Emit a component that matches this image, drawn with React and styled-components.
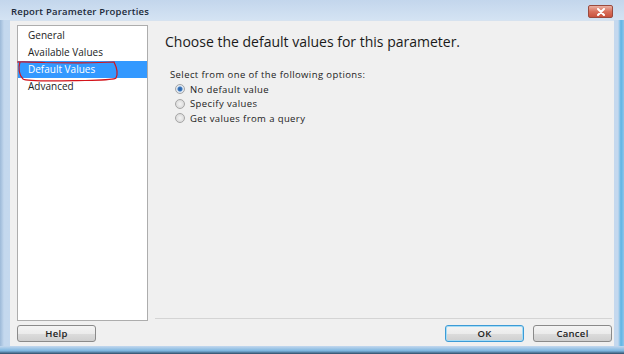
import React from 'react';
import styled, { createGlobalStyle } from 'styled-components';

const GlobalStyle = createGlobalStyle`
    html, body {
        margin: 0;
        padding: 0;
        background: #ffffff;
    }
    body {
        font-family: "Open Sans", "DejaVu Sans", sans-serif;
    }
`

const pages = ['General', 'Available Values', 'Default Values', 'Advanced'];

const options = ['No default value', 'Specify values', 'Get values from a query'];

const App = () => {

    const mapToItems = (list) => {
        return list.map((value, index) => (
            <NavItem key={index} selected={value === 'Default Values'}>{value}</NavItem>
        ));
    }

    const mapToOptions = (list) => {
        return list.map((value, index) => (
            <Option key={index}>
                <Radio checked={index === 0} />
                <span>{value}</span>
            </Option>
        ));
    }

    return (
        <>
            <GlobalStyle />
            <Window>
                <TitleBar>
                    <Title>Report Parameter Properties</Title>
                    <CloseButton>
                        <svg width="10" height="8" viewBox="0 0 10 8">
                            <path d="M2 1 L8 7 M8 1 L2 7" stroke="#ffffff" strokeWidth="2" strokeLinecap="round" />
                        </svg>
                    </CloseButton>
                </TitleBar>
                <Client>
                    <Body>
                        <Sidebar>
                            { mapToItems(pages) }
                            <Scribble width="110" height="26" viewBox="0 0 110 26">
                                <path
                                    d="M5 1 C3 7 4 14 8 18 C12 21 40 20 70 19.5 C88 19 99 19 101 17 C103 13 102 7 99 1 C85 2 60 2 30 1.5 C18 1 8 0.5 2 1"
                                    fill="none"
                                    stroke="#d3141b"
                                    strokeWidth="1.2"
                                />
                            </Scribble>
                        </Sidebar>
                        <Main>
                            <Heading>Choose the default values for this parameter.</Heading>
                            <Prompt>Select from one of the following options:</Prompt>
                            <OptionList>
                                { mapToOptions(options) }
                            </OptionList>
                        </Main>
                    </Body>
                    <Footer>
                        <Button>Help</Button>
                        <Spacer />
                        <Button primary>OK</Button>
                        <Button>Cancel</Button>
                    </Footer>
                </Client>
                <BottomEdge />
            </Window>
        </>
    )
}

const Window = styled.div`
    width: 624px;
    height: 354px;
    display: flex;
    flex-direction: column;
    background: linear-gradient(to right, #9cb9d8 0px, #c4d8ee 4px, #c9dcf0 50%, #c4d8ee calc(100% - 6px), #5fb4e4 calc(100% - 3px), #8ec5ea 100%);
    box-sizing: border-box;
    overflow: hidden;
`

const TitleBar = styled.div`
    height: 20px;
    display: flex;
    align-items: center;
    padding: 0 11px 0 11px;
    background: linear-gradient(to bottom, #c3d6ec, #d4e3f3);
`

const Title = styled.div`
    flex: 1;
    font-size: 9.5px;
    letter-spacing: 0.2px;
    font-weight: 600;
    color: #1c2a3a;
    padding-top: 2px;
`

const CloseButton = styled.div`
    width: 25px;
    height: 13px;
    margin-top: 3px;
    display: flex;
    align-items: center;
    justify-content: center;
    border: 1px solid #9a4a3e;
    border-radius: 2px;
    background: linear-gradient(to bottom, #eab1a4, #d9705c 50%, #c9523e);
    box-sizing: border-box;
`

const Client = styled.div`
    flex: 1;
    margin: 0 10px 0 10px;
    padding: 4px 2px 4px 7px;
    background: #f0f0f0;
    border-top: 1px solid #d6e2ef;
    display: flex;
    flex-direction: column;
    gap: 4px;
`

const Body = styled.div`
    flex: 1;
    display: flex;
`

const Sidebar = styled.div`
    position: relative;
    width: 131px;
    background: #ffffff;
    border: 1px solid #adadad;
    box-sizing: border-box;
    padding-top: 1px;
    display: flex;
    flex-direction: column;
`

const NavItem = styled.div`
    height: 17px;
    line-height: 17px;
    padding-left: 10px;
    font-size: 10px;
    color: ${props => props.selected ? '#ffffff' : '#222222'};
    background: ${props => props.selected ? '#3399ff' : 'transparent'};
`

const Scribble = styled.svg`
    position: absolute;
    left: -3px;
    top: 35px;
    overflow: visible;
`

const Main = styled.div`
    flex: 1;
    margin-left: 7px;
    padding-left: 10px;
    border-bottom: 1px solid #d4d4d4;
    margin-bottom: 2px;
`

const Heading = styled.div`
    margin-top: 7px;
    font-size: 14px;
    line-height: 19px;
    color: #1a1a1a;
`

const Prompt = styled.div`
    margin-top: 17px;
    margin-left: 5px;
    font-size: 9.5px;
    line-height: 13px;
    letter-spacing: 0.4px;
    color: #222222;
`

const OptionList = styled.div`
    margin-top: 1px;
    margin-left: 10px;
    display: flex;
    flex-direction: column;
`

const Option = styled.div`
    height: 14.5px;
    display: flex;
    align-items: center;
    gap: 5px;
    font-size: 9.5px;
    letter-spacing: 0.4px;
    color: #222222;
`

const Radio = styled.div`
    width: 8px;
    height: 8px;
    border-radius: 50%;
    border: 1px solid #a5a5a5;
    background: radial-gradient(circle, ${props => props.checked ? '#2c5f9e 0, #3b78c0 2px, #dfe8f2 3px' : '#f4f4f4 0, #dcdcdc 4px'});
`

const Footer = styled.div`
    height: 17px;
    display: flex;
    gap: 9px;
`

const Spacer = styled.div`
    flex: 1;
`

const Button = styled.div`
    width: 79px;
    height: 17px;
    box-sizing: border-box;
    display: flex;
    align-items: center;
    justify-content: center;
    font-size: 9.5px;
    font-weight: 600;
    letter-spacing: 0.3px;
    color: #222222;
    border: 1px solid ${props => props.primary ? '#3c9bd6' : '#8a8a8a'};
    border-radius: 3px;
    background: linear-gradient(to bottom, #f4f4f4, #ebebeb 50%, #dcdcdc 51%, #cfcfcf);
    box-shadow: ${props => props.primary ? 'inset 0 0 0 1px #a6dcf5' : 'none'};
`

const BottomEdge = styled.div`
    height: 8px;
    background: linear-gradient(to bottom, #c4d8ee, #7db6e0 60%, #2f4b66);
`

export default App;
